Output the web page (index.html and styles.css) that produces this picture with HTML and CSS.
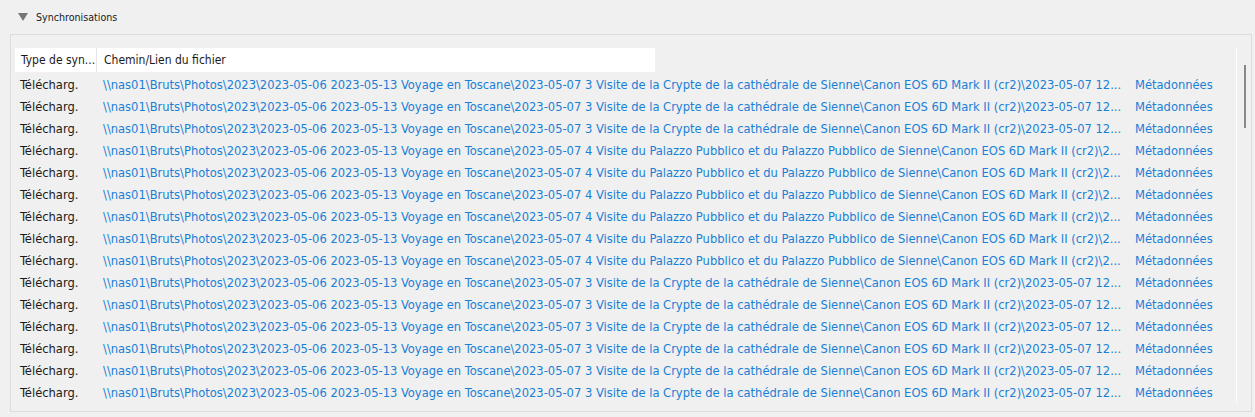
FILE: index.html
```html
<!DOCTYPE html>
<html lang="fr">
<head>
	<meta charset="UTF-8">
	<title>Synchronisations</title>
	<link rel="stylesheet" href="styles.css">
</head>
<body>
	<div class="title">
		<svg class="arrow" width="10" height="8" viewBox="0 0 10 8"><polygon points="0,0 10,0 5,8" fill="#767676"/></svg>
		<span>Synchronisations</span>
	</div>
	<div class="group">
		<div class="list">
			<div class="head">
				<div class="c1">Type de syn...</div>
				<div class="c2">Chemin/Lien du fichier</div>
			</div>
			<div class="row"><span class="c1">Télécharg.</span><span class="c2">\\nas01\Bruts\Photos\2023\2023-05-06 2023-05-13 Voyage en Toscane\2023-05-07 3 Visite de la Crypte de la cathédrale de Sienne\Canon EOS 6D Mark II (cr2)\2023-05-07 12...</span><span class="c3">Métadonnées</span></div>
			<div class="row"><span class="c1">Télécharg.</span><span class="c2">\\nas01\Bruts\Photos\2023\2023-05-06 2023-05-13 Voyage en Toscane\2023-05-07 3 Visite de la Crypte de la cathédrale de Sienne\Canon EOS 6D Mark II (cr2)\2023-05-07 12...</span><span class="c3">Métadonnées</span></div>
			<div class="row"><span class="c1">Télécharg.</span><span class="c2">\\nas01\Bruts\Photos\2023\2023-05-06 2023-05-13 Voyage en Toscane\2023-05-07 3 Visite de la Crypte de la cathédrale de Sienne\Canon EOS 6D Mark II (cr2)\2023-05-07 12...</span><span class="c3">Métadonnées</span></div>
			<div class="row"><span class="c1">Télécharg.</span><span class="c2">\\nas01\Bruts\Photos\2023\2023-05-06 2023-05-13 Voyage en Toscane\2023-05-07 4 Visite du Palazzo Pubblico et du Palazzo Pubblico de Sienne\Canon EOS 6D Mark II (cr2)\2...</span><span class="c3">Métadonnées</span></div>
			<div class="row"><span class="c1">Télécharg.</span><span class="c2">\\nas01\Bruts\Photos\2023\2023-05-06 2023-05-13 Voyage en Toscane\2023-05-07 4 Visite du Palazzo Pubblico et du Palazzo Pubblico de Sienne\Canon EOS 6D Mark II (cr2)\2...</span><span class="c3">Métadonnées</span></div>
			<div class="row"><span class="c1">Télécharg.</span><span class="c2">\\nas01\Bruts\Photos\2023\2023-05-06 2023-05-13 Voyage en Toscane\2023-05-07 4 Visite du Palazzo Pubblico et du Palazzo Pubblico de Sienne\Canon EOS 6D Mark II (cr2)\2...</span><span class="c3">Métadonnées</span></div>
			<div class="row"><span class="c1">Télécharg.</span><span class="c2">\\nas01\Bruts\Photos\2023\2023-05-06 2023-05-13 Voyage en Toscane\2023-05-07 4 Visite du Palazzo Pubblico et du Palazzo Pubblico de Sienne\Canon EOS 6D Mark II (cr2)\2...</span><span class="c3">Métadonnées</span></div>
			<div class="row"><span class="c1">Télécharg.</span><span class="c2">\\nas01\Bruts\Photos\2023\2023-05-06 2023-05-13 Voyage en Toscane\2023-05-07 4 Visite du Palazzo Pubblico et du Palazzo Pubblico de Sienne\Canon EOS 6D Mark II (cr2)\2...</span><span class="c3">Métadonnées</span></div>
			<div class="row"><span class="c1">Télécharg.</span><span class="c2">\\nas01\Bruts\Photos\2023\2023-05-06 2023-05-13 Voyage en Toscane\2023-05-07 4 Visite du Palazzo Pubblico et du Palazzo Pubblico de Sienne\Canon EOS 6D Mark II (cr2)\2...</span><span class="c3">Métadonnées</span></div>
			<div class="row"><span class="c1">Télécharg.</span><span class="c2">\\nas01\Bruts\Photos\2023\2023-05-06 2023-05-13 Voyage en Toscane\2023-05-07 3 Visite de la Crypte de la cathédrale de Sienne\Canon EOS 6D Mark II (cr2)\2023-05-07 12...</span><span class="c3">Métadonnées</span></div>
			<div class="row"><span class="c1">Télécharg.</span><span class="c2">\\nas01\Bruts\Photos\2023\2023-05-06 2023-05-13 Voyage en Toscane\2023-05-07 3 Visite de la Crypte de la cathédrale de Sienne\Canon EOS 6D Mark II (cr2)\2023-05-07 12...</span><span class="c3">Métadonnées</span></div>
			<div class="row"><span class="c1">Télécharg.</span><span class="c2">\\nas01\Bruts\Photos\2023\2023-05-06 2023-05-13 Voyage en Toscane\2023-05-07 3 Visite de la Crypte de la cathédrale de Sienne\Canon EOS 6D Mark II (cr2)\2023-05-07 12...</span><span class="c3">Métadonnées</span></div>
			<div class="row"><span class="c1">Télécharg.</span><span class="c2">\\nas01\Bruts\Photos\2023\2023-05-06 2023-05-13 Voyage en Toscane\2023-05-07 3 Visite de la Crypte de la cathédrale de Sienne\Canon EOS 6D Mark II (cr2)\2023-05-07 12...</span><span class="c3">Métadonnées</span></div>
			<div class="row"><span class="c1">Télécharg.</span><span class="c2">\\nas01\Bruts\Photos\2023\2023-05-06 2023-05-13 Voyage en Toscane\2023-05-07 3 Visite de la Crypte de la cathédrale de Sienne\Canon EOS 6D Mark II (cr2)\2023-05-07 12...</span><span class="c3">Métadonnées</span></div>
			<div class="row"><span class="c1">Télécharg.</span><span class="c2">\\nas01\Bruts\Photos\2023\2023-05-06 2023-05-13 Voyage en Toscane\2023-05-07 3 Visite de la Crypte de la cathédrale de Sienne\Canon EOS 6D Mark II (cr2)\2023-05-07 12...</span><span class="c3">Métadonnées</span></div>
		</div>
		<div class="scroll"><div class="thumb"></div></div>
	</div>
</body>
</html>
```

FILE: styles.css
```css
body{margin: 0;background-color: #f0f0f0;font-family: "DejaVu Sans Condensed","Liberation Sans",sans-serif;font-size: 12.8px;color: #1a1a1a;}
.title{height: 34px;display: flex;align-items: center;padding-left: 18px;gap: 8px;font-size: 10.6px;}
.title .arrow{display: block;margin-top: -1px;}
.group{margin: 0 3px 0 10px;border: 1px solid #dcdcdc;display: flex;padding: 13px 0 8px 4px;box-sizing: border-box;height: 378px;}
.list{flex: 1;border-right: 1px solid #fff;overflow: hidden;}
.head{display: flex;width: 640px;height: 24px;background-color: #fff;align-items: center;margin-bottom: 2px;font-size: 12px;}
.head .c1{width: 82px;padding-left: 6px;box-sizing: border-box;border-right: 1px solid #e5e5e5;height: 24px;line-height: 24px;white-space: nowrap;}
.head .c2{padding-left: 7px;}
.row{display: flex;height: 22px;line-height: 22px;white-space: nowrap;}
.row .c1{width: 83px;padding-left: 5px;box-sizing: border-box;flex: none;}
.row .c2{width: 1037px;flex: none;padding-left: 5px;box-sizing: border-box;color: #1a7fd6;overflow: hidden;}
.row .c3{color: #1a7fd6;}
.scroll{width: 14px;flex: none;}
.thumb{width: 2px;height: 63px;background-color: #888;margin: 17px 0 0 7px;}
```
